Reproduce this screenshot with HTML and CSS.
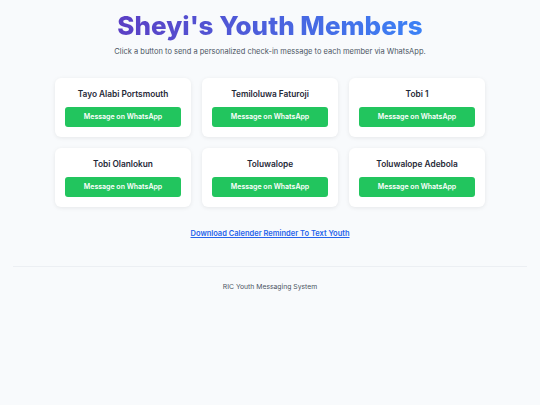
FILE: index.html
```html
<!DOCTYPE html>
<html lang="en">
<head>
    <meta charset="UTF-8">
    <meta name="viewport" content="width=device-width, initial-scale=1.0">
    <title>Sheyi's Youth Members</title>
    <link rel="stylesheet" href="styles.css">
</head>
<body>
    <header class="page-header">
        <h1>Sheyi's Youth Members</h1>
        <p>Click a button to send a personalized check-in message to each member via WhatsApp.</p>
    </header>

    <main class="container">
        <div class="members">
            <div class="member-card">
                <h3>Tayo Alabi Portsmouth</h3>
                <a class="wa-btn" href="#">Message on WhatsApp</a>
            </div>
            <div class="member-card">
                <h3>Temiloluwa Faturoji</h3>
                <a class="wa-btn" href="#">Message on WhatsApp</a>
            </div>
            <div class="member-card">
                <h3>Tobi 1</h3>
                <a class="wa-btn" href="#">Message on WhatsApp</a>
            </div>
            <div class="member-card">
                <h3>Tobi Olanlokun</h3>
                <a class="wa-btn" href="#">Message on WhatsApp</a>
            </div>
            <div class="member-card">
                <h3>Toluwalope</h3>
                <a class="wa-btn" href="#">Message on WhatsApp</a>
            </div>
            <div class="member-card">
                <h3>Toluwalope Adebola</h3>
                <a class="wa-btn" href="#">Message on WhatsApp</a>
            </div>
        </div>

        <div class="reminder">
            <a href="#">Download Calender Reminder To Text Youth</a>
        </div>
    </main>

    <footer>
        <p>RIC Youth Messaging System</p>
    </footer>
</body>
</html>
```

FILE: styles.css
```css
/* Global Styles */
* {
    box-sizing: border-box;
}
body {
    font-family: Inter, "Noto Sans", sans-serif;
    margin: 0;
    padding: 0;
    background-color: #f8fafc;
    color: #1f2937;
}

/* Header */
.page-header {
    text-align: center;
    padding-top: 9px;
}
.page-header h1 {
    margin: 0;
    font-size: 26px;
    font-weight: 800;
    line-height: 34px;
    background: linear-gradient(90deg, #5b3fc4, #3b82f6);
    -webkit-background-clip: text;
    background-clip: text;
    color: transparent;
    display: inline-block;
}
.page-header p {
    margin: 4px 0 0;
    font-size: 7.5px;
    color: #4b5563;
}

/* Members */
.container {
    max-width: 430px;
    margin: 0 auto;
    padding-top: 22px;
}
.members {
    display: grid;
    grid-template-columns: repeat(3, 1fr);
    gap: 11px 11px;
}
.member-card {
    background-color: #fff;
    border-radius: 6px;
    box-shadow: 0 1px 4px rgba(0, 0, 0, 0.08);
    padding: 10px;
    text-align: center;
}
.member-card h3 {
    margin: 0 0 7px;
    font-size: 8.3px;
    font-weight: 600;
    line-height: 12px;
    color: #1f2937;
}
.wa-btn {
    display: block;
    background-color: #22c55e;
    color: #fff;
    font-size: 7px;
    font-weight: 600;
    text-decoration: none;
    line-height: 20px;
    border-radius: 3px;
}

.reminder {
    text-align: center;
    margin-top: 13px;
}
.reminder a {
    color: #2563eb;
    font-size: 7.5px;
    font-weight: 600;
}

/* Footer */
footer {
    margin: 26px 13px 0;
    border-top: 1px solid #eceff3;
    text-align: center;
    padding-top: 15px;
}
footer p {
    margin: 0;
    font-size: 6.8px;
    color: #4b5563;
}
```
